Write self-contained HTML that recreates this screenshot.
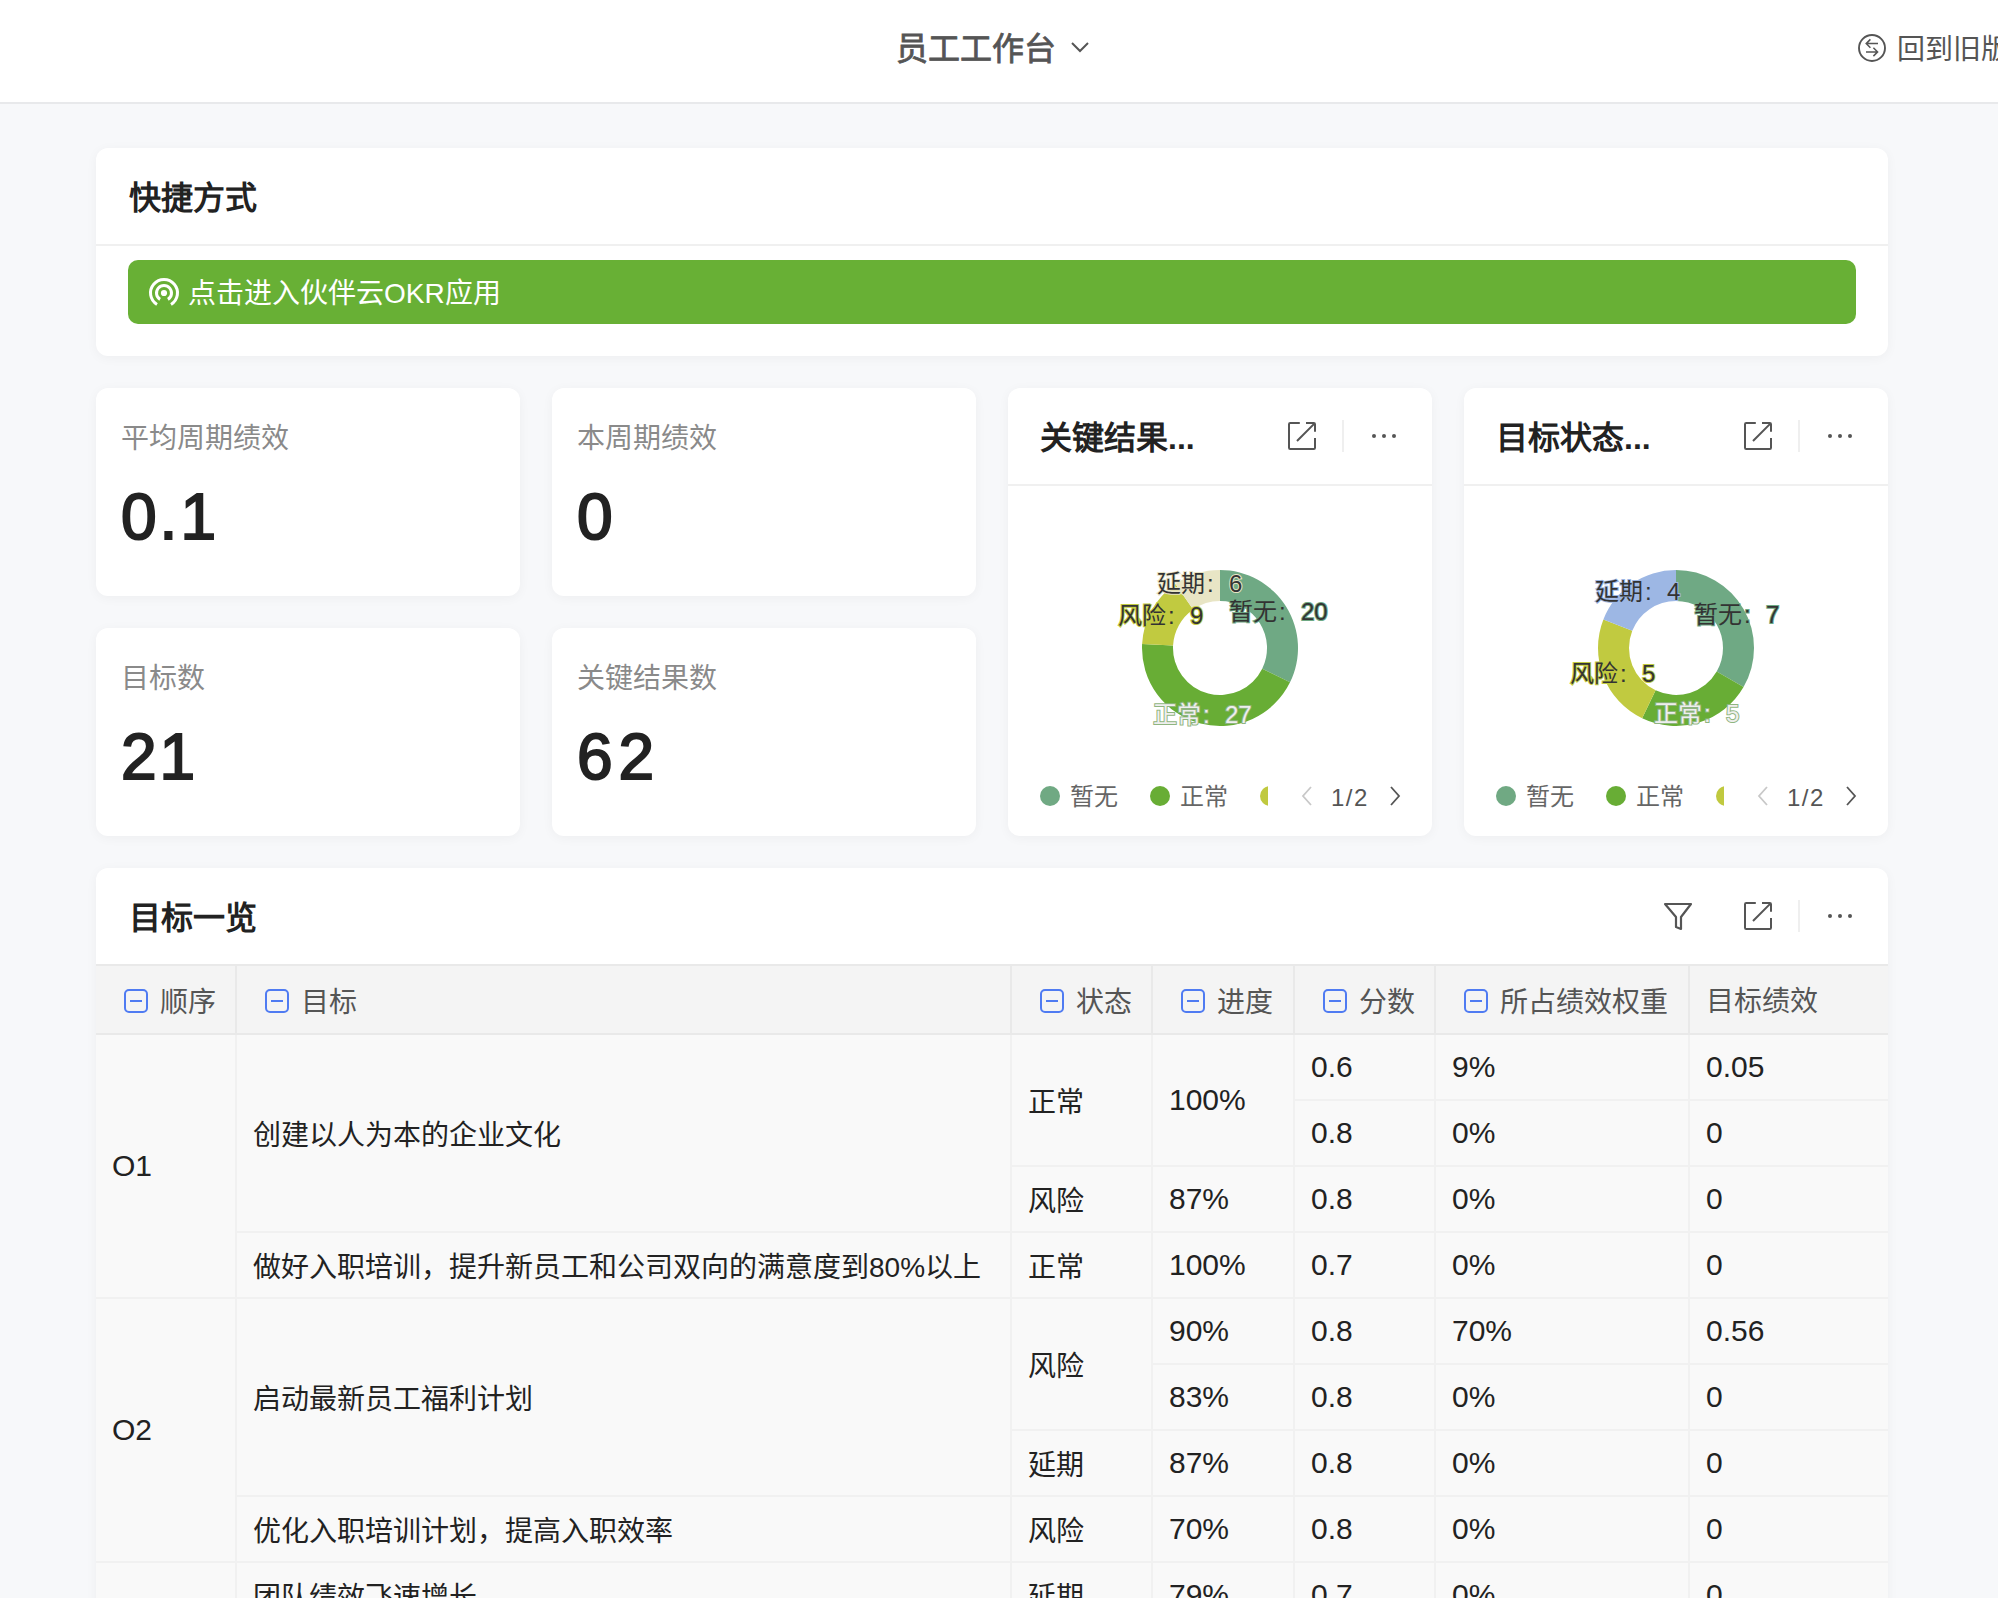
<!DOCTYPE html>
<html lang="zh-CN"><head><meta charset="utf-8">
<style>
*{margin:0;padding:0;box-sizing:border-box}
html,body{width:1998px;height:1598px;overflow:hidden}
body{background:#f7f8fa;font-family:"Liberation Sans",sans-serif;color:#222;position:relative}
.abs{position:absolute}
#hdr{position:absolute;left:0;top:0;width:1998px;height:104px;background:#fff;border-bottom:2px solid #e8e9eb}
#hdr .t{position:absolute;left:896px;top:27px;font-size:32px;font-weight:400;-webkit-text-stroke:0.8px #555;color:#555;line-height:44px;white-space:nowrap}
#hdr .r{position:absolute;left:1897px;top:30px;font-size:28px;color:#555;line-height:40px;white-space:nowrap}
.card{position:absolute;background:#fff;border-radius:12px;box-shadow:0 2px 12px rgba(0,0,0,0.045)}
.ctitle{position:absolute;font-size:32px;font-weight:700;color:#222;line-height:44px;white-space:nowrap;margin-top:2px}
.divh{position:absolute;left:0;right:0;height:2px;background:#f0f0f0}
.btn{position:absolute;left:32px;top:112px;width:1728px;height:64px;background:#68b035;border-radius:10px;color:#fff;font-size:28px}
.btn span{position:absolute;left:60px;top:14px;line-height:40px;white-space:nowrap}
.lbl{position:absolute;left:25px;top:31px;font-size:28px;color:#8a8a8a;line-height:40px;white-space:nowrap}
.val{position:absolute;left:25px;top:92px;font-size:64px;font-weight:400;-webkit-text-stroke:2px #222;letter-spacing:3px;color:#222;line-height:74px;white-space:nowrap}
.icons{position:absolute;top:0;right:0;height:96px;width:180px}
.sep{position:absolute;width:2px;height:32px;background:#efefef}
.leg{position:absolute;font-size:24px;color:#666;line-height:32px;white-space:nowrap;margin-top:2px}
.dot{position:absolute;width:20px;height:20px;border-radius:50%}
table{border-collapse:collapse;table-layout:fixed;position:absolute;left:-2px;top:96px}
td,th{border:2px solid #f1f1f1;font-size:28px;color:#222;text-align:left;vertical-align:middle;font-weight:400;height:66px;padding:0 0 0 16px;white-space:nowrap;background:#f9f9f9}
th{background:#f4f4f4;border-color:#e9e9e9;color:#555;height:69px;padding-left:28px;padding-top:0}
th.nl{padding-left:16px;padding-top:0;padding-bottom:1px}
td.n{font-size:30px}
.mi{display:inline-block;width:24px;height:24px;border:2px solid #4f7bf2;border-radius:5px;position:relative;vertical-align:-1px;margin-right:12px}
.mi:after{content:"";position:absolute;left:4px;top:9px;width:12px;height:2px;background:#4f7bf2}
</style></head><body>
<div id="hdr">
  <div class="t">员工工作台</div>
  <svg class="abs" style="left:1068px;top:38px" width="24" height="20" viewBox="0 0 24 20"><path d="M4 5 L12 13 L20 5" fill="none" stroke="#555" stroke-width="2"/></svg>
  <svg class="abs" style="left:1857px;top:33px" width="30" height="30" viewBox="0 0 30 30"><circle cx="15" cy="15" r="13" fill="none" stroke="#555" stroke-width="1.9"/><path d="M21 10.6 H9.4 M13.4 6.4 L9.2 10.6 L13.4 14.8 M9 18.9 H20.6 M16.4 14.7 L20.6 18.9 L16.4 23.1" fill="none" stroke="#555" stroke-width="1.5"/></svg>
  <div class="r">回到旧版</div>
</div>

<!-- quick card -->
<div class="card" style="left:96px;top:148px;width:1792px;height:208px">
  <div class="ctitle" style="left:33px;top:26px">快捷方式</div>
  <div class="divh" style="top:96px"></div>
  <div class="btn">
    <svg class="abs" style="left:20px;top:17px" width="32" height="32" viewBox="0 0 32 32"><path d="M9 27.5 A13.5 13.5 0 1 1 23 27.5" fill="none" stroke="#fff" stroke-width="3"/><path d="M12.1 22.4 A7.5 7.5 0 1 1 19.9 22.4" fill="none" stroke="#fff" stroke-width="3"/><circle cx="16" cy="16" r="3.1" fill="#fff"/></svg>
    <span>点击进入伙伴云OKR应用</span>
  </div>
</div>

<!-- stat cards -->
<div class="card" style="left:96px;top:388px;width:424px;height:208px"><div class="lbl">平均周期绩效</div><div class="val">0.1</div></div>
<div class="card" style="left:552px;top:388px;width:424px;height:208px"><div class="lbl">本周期绩效</div><div class="val">0</div></div>
<div class="card" style="left:96px;top:628px;width:424px;height:208px"><div class="lbl">目标数</div><div class="val">21</div></div>
<div class="card" style="left:552px;top:628px;width:424px;height:208px"><div class="lbl">关键结果数</div><div class="val" style="letter-spacing:6px">62</div></div>

<!-- chart card 1 -->
<div class="card" style="left:1008px;top:388px;width:424px;height:448px">
  <div class="ctitle" style="left:32px;top:26px">关键结果...</div>
  <svg class="abs" style="left:278px;top:32px" width="32" height="32" viewBox="0 0 32 32"><path d="M13.8 3 H4.2 Q3 3 3 4.2 V27.8 Q3 29 4.2 29 H27.8 Q29 29 29 27.8 V18 M20 3 H27.8 Q29 3 29 4.2 V11.8 M28.6 3.4 L11 21" fill="none" stroke="#555" stroke-width="2"/></svg>
  <div class="sep" style="left:334px;top:32px"></div>
  <svg class="abs" style="left:362px;top:40px" width="36" height="16" viewBox="0 0 36 16"><circle cx="4" cy="8" r="2" fill="#555"/><circle cx="14" cy="8" r="2" fill="#555"/><circle cx="24" cy="8" r="2" fill="#555"/></svg>
  <div class="divh" style="top:96px"></div>
  <svg class="abs" style="left:0;top:0" width="424" height="448" viewBox="0 0 424 448" id="ch1"><path d="M212.00 182.00 A78 78 0 0 1 282.03 294.35 L254.20 280.70 A47 47 0 0 0 212.00 213.00 Z" fill="#6fa984"/><path d="M282.03 294.35 A78 78 0 0 1 134.10 256.05 L165.06 257.62 A47 47 0 0 0 254.20 280.70 Z" fill="#68ad35"/><path d="M134.10 256.05 A78 78 0 0 1 167.44 195.98 L185.15 221.42 A47 47 0 0 0 165.06 257.62 Z" fill="#c1ca40"/><path d="M167.44 195.98 A78 78 0 0 1 212.00 182.00 L212.00 213.00 A47 47 0 0 0 185.15 221.42 Z" fill="#e8e5c5"/><g font-size="24" fill="#333" stroke="#e8e5c5" stroke-width="2" paint-order="stroke" style="font-family:'Liberation Sans',sans-serif"><text x="149" y="204">延期</text><text x="199" y="204">:</text><text x="221" y="204">6</text></g><g font-size="24" fill="#333" stroke="#6fa984" stroke-width="2" paint-order="stroke" style="font-family:'Liberation Sans',sans-serif"><text x="221" y="232">暂无</text><text x="271" y="232">:</text><text x="293" y="232">20</text></g><g font-size="24" fill="#333" stroke="#c1ca40" stroke-width="2" paint-order="stroke" style="font-family:'Liberation Sans',sans-serif"><text x="110" y="236">风险</text><text x="160" y="236">:</text><text x="182" y="236">9</text></g><g font-size="24" fill="#eee" stroke="#8fb580" stroke-width="2" paint-order="stroke" style="font-family:'Liberation Sans',sans-serif"><text x="145" y="335">正常</text><text x="195" y="335">:</text><text x="217" y="335">27</text></g></svg>
  <div class="dot" style="left:32px;top:398px;background:#70a983"></div><div class="leg" style="left:62px;top:391px">暂无</div>
  <div class="dot" style="left:142px;top:398px;background:#68ad35"></div><div class="leg" style="left:172px;top:391px">正常</div>
  <div class="dot" style="left:252px;top:398px;background:#c0c93f;clip-path:inset(0 12px 0 0)"></div>
  <svg class="abs" style="left:290px;top:396px" width="20" height="24" viewBox="0 0 20 24"><path d="M13 3 L5 12 L13 21" fill="none" stroke="#c8c8c8" stroke-width="1.8"/></svg>
  <div class="leg" style="left:323px;top:392px;color:#555;letter-spacing:1.5px">1/2</div>
  <svg class="abs" style="left:376px;top:396px" width="20" height="24" viewBox="0 0 20 24"><path d="M7 3 L15 12 L7 21" fill="none" stroke="#555" stroke-width="1.8"/></svg>
</div>

<!-- chart card 2 -->
<div class="card" style="left:1464px;top:388px;width:424px;height:448px">
  <div class="ctitle" style="left:32px;top:26px">目标状态...</div>
  <svg class="abs" style="left:278px;top:32px" width="32" height="32" viewBox="0 0 32 32"><path d="M13.8 3 H4.2 Q3 3 3 4.2 V27.8 Q3 29 4.2 29 H27.8 Q29 29 29 27.8 V18 M20 3 H27.8 Q29 3 29 4.2 V11.8 M28.6 3.4 L11 21" fill="none" stroke="#555" stroke-width="2"/></svg>
  <div class="sep" style="left:334px;top:32px"></div>
  <svg class="abs" style="left:362px;top:40px" width="36" height="16" viewBox="0 0 36 16"><circle cx="4" cy="8" r="2" fill="#555"/><circle cx="14" cy="8" r="2" fill="#555"/><circle cx="24" cy="8" r="2" fill="#555"/></svg>
  <div class="divh" style="top:96px"></div>
  <svg class="abs" style="left:0;top:0" width="424" height="448" viewBox="0 0 424 448" id="ch2"><path d="M212.00 182.00 A78 78 0 0 1 279.55 299.00 L252.70 283.50 A47 47 0 0 0 212.00 213.00 Z" fill="#6fa984"/><path d="M279.55 299.00 A78 78 0 0 1 178.16 330.28 L191.61 302.35 A47 47 0 0 0 252.70 283.50 Z" fill="#68ad35"/><path d="M178.16 330.28 A78 78 0 0 1 139.39 231.50 L168.25 242.83 A47 47 0 0 0 191.61 302.35 Z" fill="#c1ca40"/><path d="M139.39 231.50 A78 78 0 0 1 212.00 182.00 L212.00 213.00 A47 47 0 0 0 168.25 242.83 Z" fill="#9db7e4"/><g font-size="24" fill="#333" stroke="#9db7e4" stroke-width="2" paint-order="stroke" style="font-family:'Liberation Sans',sans-serif"><text x="131" y="212">延期</text><text x="181" y="212">:</text><text x="203" y="212">4</text></g><g font-size="24" fill="#333" stroke="#6fa984" stroke-width="2" paint-order="stroke" style="font-family:'Liberation Sans',sans-serif"><text x="230" y="235">暂无</text><text x="280" y="235">:</text><text x="302" y="235">7</text></g><g font-size="24" fill="#333" stroke="#c1ca40" stroke-width="2" paint-order="stroke" style="font-family:'Liberation Sans',sans-serif"><text x="106" y="294">风险</text><text x="156" y="294">:</text><text x="178" y="294">5</text></g><g font-size="24" fill="#eee" stroke="#8fb580" stroke-width="2" paint-order="stroke" style="font-family:'Liberation Sans',sans-serif"><text x="190" y="334">正常</text><text x="240" y="334">:</text><text x="262" y="334">5</text></g></svg>
  <div class="dot" style="left:32px;top:398px;background:#70a983"></div><div class="leg" style="left:62px;top:391px">暂无</div>
  <div class="dot" style="left:142px;top:398px;background:#68ad35"></div><div class="leg" style="left:172px;top:391px">正常</div>
  <div class="dot" style="left:252px;top:398px;background:#c0c93f;clip-path:inset(0 12px 0 0)"></div>
  <svg class="abs" style="left:290px;top:396px" width="20" height="24" viewBox="0 0 20 24"><path d="M13 3 L5 12 L13 21" fill="none" stroke="#c8c8c8" stroke-width="1.8"/></svg>
  <div class="leg" style="left:323px;top:392px;color:#555;letter-spacing:1.5px">1/2</div>
  <svg class="abs" style="left:376px;top:396px" width="20" height="24" viewBox="0 0 20 24"><path d="M7 3 L15 12 L7 21" fill="none" stroke="#555" stroke-width="1.8"/></svg>
</div>

<!-- table card -->
<div class="card" id="tcard" style="left:96px;top:868px;width:1792px;height:800px;overflow:hidden">
  <div class="ctitle" style="left:33px;top:26px">目标一览</div>
  <svg class="abs" style="left:1566px;top:32px" width="32" height="32" viewBox="0 0 32 32"><path d="M3 4 H29 L19 17 V29 L14 27 V17 Z" fill="none" stroke="#555" stroke-width="2.2" stroke-linejoin="round"/></svg>
  <svg class="abs" style="left:1646px;top:32px" width="32" height="32" viewBox="0 0 32 32"><path d="M13.8 3 H4.2 Q3 3 3 4.2 V27.8 Q3 29 4.2 29 H27.8 Q29 29 29 27.8 V18 M20 3 H27.8 Q29 3 29 4.2 V11.8 M28.6 3.4 L11 21" fill="none" stroke="#555" stroke-width="2"/></svg>
  <div class="sep" style="left:1702px;top:32px"></div>
  <svg class="abs" style="left:1730px;top:40px" width="36" height="16" viewBox="0 0 36 16"><circle cx="4" cy="8" r="2" fill="#555"/><circle cx="14" cy="8" r="2" fill="#555"/><circle cx="24" cy="8" r="2" fill="#555"/></svg>
  <table style="width:1798px"><colgroup><col style="width:141px"><col style="width:775px"><col style="width:141px"><col style="width:142px"><col style="width:141px"><col style="width:254px"><col style="width:204px"></colgroup><tr><th><i class="mi"></i>顺序</th><th><i class="mi"></i>目标</th><th><i class="mi"></i>状态</th><th><i class="mi"></i>进度</th><th><i class="mi"></i>分数</th><th><i class="mi"></i>所占绩效权重</th><th class="nl">目标绩效</th></tr><tr><td rowspan="4" class="n">O1</td><td rowspan="3">创建以人为本的企业文化</td><td rowspan="2">正常</td><td rowspan="2" class="n">100%</td><td class="n">0.6</td><td class="n">9%</td><td class="n">0.05</td></tr><tr><td class="n">0.8</td><td class="n">0%</td><td class="n">0</td></tr><tr><td>风险</td><td class="n">87%</td><td class="n">0.8</td><td class="n">0%</td><td class="n">0</td></tr><tr><td>做好入职培训，提升新员工和公司双向的满意度到80%以上</td><td>正常</td><td class="n">100%</td><td class="n">0.7</td><td class="n">0%</td><td class="n">0</td></tr><tr><td rowspan="4" class="n">O2</td><td rowspan="3">启动最新员工福利计划</td><td rowspan="2">风险</td><td class="n">90%</td><td class="n">0.8</td><td class="n">70%</td><td class="n">0.56</td></tr><tr><td class="n">83%</td><td class="n">0.8</td><td class="n">0%</td><td class="n">0</td></tr><tr><td>延期</td><td class="n">87%</td><td class="n">0.8</td><td class="n">0%</td><td class="n">0</td></tr><tr><td>优化入职培训计划，提高入职效率</td><td>风险</td><td class="n">70%</td><td class="n">0.8</td><td class="n">0%</td><td class="n">0</td></tr><tr><td rowspan="2" class="n">O3</td><td>团队绩效飞速增长</td><td>延期</td><td class="n">79%</td><td class="n">0.7</td><td class="n">0%</td><td class="n">0</td></tr><tr><td></td><td></td><td></td><td></td><td></td><td></td></tr></table>
</div>
</body></html>
